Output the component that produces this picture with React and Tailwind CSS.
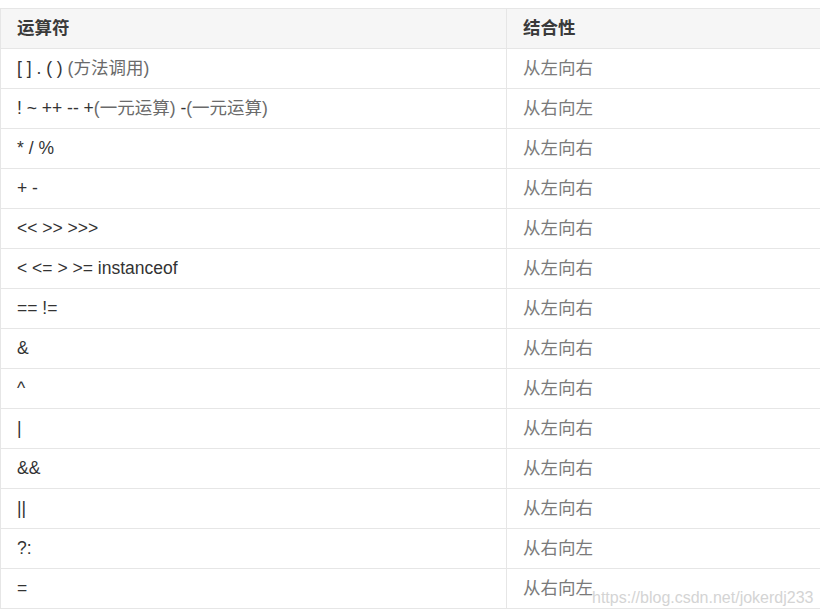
const rows = [
  { op: ['[ ] . ( ) ', '(方法调用)'], dir: '从左向右' },
  { op: ['! ~ ++ -- +', '(一元运算)', ' -', '(一元运算)'], dir: '从右向左' },
  { op: ['* / %'], dir: '从左向右' },
  { op: ['+ -'], dir: '从左向右' },
  { op: ['<< >> >>>'], dir: '从左向右' },
  { op: ['< <= > >= instanceof'], dir: '从左向右' },
  { op: ['== !='], dir: '从左向右' },
  { op: ['&'], dir: '从左向右' },
  { op: ['^'], dir: '从左向右' },
  { op: ['|'], dir: '从左向右' },
  { op: ['&&'], dir: '从左向右' },
  { op: ['||'], dir: '从左向右' },
  { op: ['?:'], dir: '从右向左' },
  { op: ['='], dir: '从右向左' },
];

const font = "font-['Liberation_Sans','Noto_Sans_CJK_SC',sans-serif]";

const OpText = ({ parts }) => (
  <span className="whitespace-pre">
    {parts.map((p, i) =>
      i % 2 === 1 ? (
        <span key={i} className="text-[#6a6a6a]">{p}</span>
      ) : (
        <span key={i} className="text-[#333]">{p}</span>
      )
    )}
  </span>
);

export default function App() {
  return (
    <div className={`relative w-[820px] h-[613px] overflow-hidden bg-white pt-[8px] ${font}`}>
      <div className="w-[840px] border-t border-l border-[#e6e6e6]">
        <div className="flex h-[40px] bg-[#f6f6f6] border-b border-[#e6e6e6] text-[17.5px] font-bold text-[#3a3a3a]">
          <div className="w-[506px] border-r border-[#e6e6e6] px-[16px] flex items-center">运算符</div>
          <div className="flex-1 px-[16px] flex items-center">结合性</div>
        </div>
        {rows.map((r, i) => (
          <div key={i} className="flex h-[40px] border-b border-[#e6e6e6] text-[17.5px]">
            <div className="w-[506px] border-r border-[#e6e6e6] px-[16px] flex items-center">
              <OpText parts={r.op} />
            </div>
            <div className="flex-1 px-[16px] flex items-center text-[#7a7a7a]">{r.dir}</div>
          </div>
        ))}
      </div>
      <div className="absolute left-[592px] top-[586px] text-[16px] text-[#d4d4d4] whitespace-nowrap">
        https://blog.csdn.net/jokerdj233
      </div>
    </div>
  );
}
